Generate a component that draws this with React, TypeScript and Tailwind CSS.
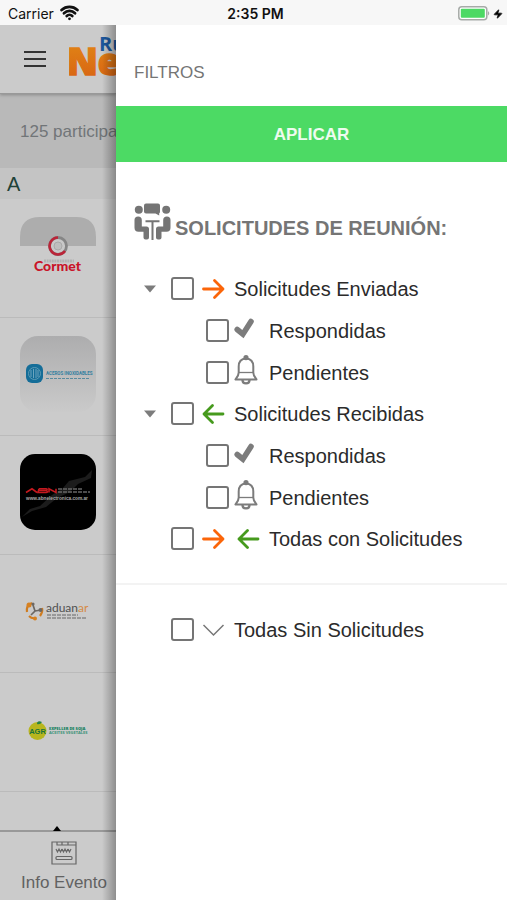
import { Wifi, Zap } from "lucide-react";
import type { ReactNode } from "react";

function Arrow({ left = false }: { left?: boolean }) {
  return (
    <svg
      viewBox="0 0 24 22"
      className={left ? "h-[22px] w-6 shrink-0 text-[#469a1d]" : "h-[22px] w-6 shrink-0 text-[#fb6509]"}
      fill="none"
      stroke="currentColor"
      strokeWidth="2.8"
      strokeLinecap="round"
      strokeLinejoin="round"
      aria-hidden="true"
    >
      {left ? <path d="M21 11H2M10.500 2.500L2 11L10.500 19.500" /> : <path d="M1.500 11H21M12.500 2.500L21 11L12.500 19.500" />}
    </svg>
  );
}

function Tick() {
  return (
    <svg viewBox="0 0 24 28" className="h-7 w-6 shrink-0" fill="none" aria-hidden="true">
      <path d="M3.200 12.500L8.900 17.200L17 4.500" stroke="#7c7c7c" strokeWidth="5.600" strokeLinecap="round" strokeLinejoin="miter" />
    </svg>
  );
}

function Bell() {
  return (
    <svg viewBox="0 0 24 30" className="h-[30px] w-6 shrink-0" fill="none" stroke="#7c7c7c" strokeWidth="2" aria-hidden="true">
      <path d="M12 3.500C7.200 3.800 4.700 7 4.700 11.500V17.500C4.700 20.500 3.300 22 1.500 24.400H22.500C20.700 22 19.300 20.500 19.300 17.500V11.500C19.300 7 16.800 3.800 12 3.500Z" strokeLinejoin="round" />
      <path d="M8.500 25C8.500 29.500 15.500 29.500 15.500 25" strokeWidth="2.300" />
      <path d="M4.500 17.500H19.500" strokeWidth="1.300" />
      <circle cx="12" cy="2.600" r="1.600" fill="#7c7c7c" />
    </svg>
  );
}

function MeetingIcon() {
  return (
    <svg viewBox="0 0 37 37" className="size-[37px] shrink-0" fill="#757575" aria-hidden="true">
      <circle cx="4.800" cy="6.800" r="4" />
      <circle cx="32.200" cy="6.800" r="4" />
      <path d="M12 0.600H24Q26 0.600 26 2.600V8.500Q26 10.300 25.200 10.300V12.500L21.500 10.500H12Q10 10.500 10 8.500V2.600Q10 .600 12 .600Z" />
      <path d="M.500 17Q.500 13.500 4.100 13.500Q7.800 13.500 7.800 17V23.500H12.500Q15 23.500 15 26V34.500Q15 36.500 13 36.500H11.500Q9.500 36.500 9.500 34.500V28.800H4.500Q.500 28.800 .500 24.800Z" />
      <path d="M36.500 17Q36.500 13.500 32.900 13.500Q29.200 13.500 29.200 17V23.500H24.500Q22 23.500 22 26V34.500Q22 36.500 24 36.500H25.500Q27.500 36.500 27.500 34.500V28.800H32.500Q36.500 28.800 36.500 24.800Z" />
      <path d="M11.500 17.200H25.500V19.200H19.500V37H17.500V19.200H11.500Z" />
    </svg>
  );
}

function Check({ id, label, icons }: { id: string; label: string; icons: ReactNode }) {
  return (
    <div className="flex h-[41px] items-center">
      <input
        id={id}
        type="checkbox"
        className="size-[23px] shrink-0 appearance-none rounded-[3px] border-2 border-[#757575] bg-white checked:bg-[#4cd964]"
      />
      <label htmlFor={id} className="flex items-center text-[20px] leading-6 whitespace-nowrap text-[#2b2b2b]">
        {icons}
        <span>{label}</span>
      </label>
    </div>
  );
}

function Group({ id, label, left }: { id: string; label: string; left: boolean }) {
  return (
    <li className="flex flex-col gap-px">
      <div className="flex items-center">
        <button aria-label={`Contraer ${label}`} className="flex h-6 w-[27px] shrink-0 items-center">
          <svg viewBox="0 0 12 8" className="h-2 w-3" aria-hidden="true">
            <path d="M0 0.500H12L6 7.500Z" fill="#7c7c7c" />
          </svg>
        </button>
        <Check id={id} label={label} icons={<span className="flex w-10 pl-2"><Arrow left={left} /></span>} />
      </div>
      <ul className="flex flex-col gap-px pl-[62px]">
        <li>
          <Check id={`${id}-respondidas`} label="Respondidas" icons={<span className="flex w-10 pl-[5px]"><Tick /></span>} />
        </li>
        <li>
          <Check id={`${id}-pendientes`} label="Pendientes" icons={<span className="flex w-10 pb-1.5 pl-[5px]"><Bell /></span>} />
        </li>
      </ul>
    </li>
  );
}

function CormetLogo() {
  return (
    <svg viewBox="0 0 76 76" className="size-[76px]" role="img" aria-label="Cormet">
      <path d="M0 29V20Q0 0 20 0H56Q76 0 76 20V29Z" fill="#adadad" />
      <circle cx="38" cy="29" r="8.500" fill="#c8c8c8" stroke="#858585" strokeWidth="2.800" />
      <path d="M38 20.500A8.500 8.500 0 1 0 45 34" fill="none" stroke="#bb2438" strokeWidth="2.600" />
      <circle cx="38" cy="29" r="4" fill="#bebebe" stroke="#a9a9a9" />
      <path d="M24 44H54" stroke="#b3b3b3" strokeWidth="3" strokeDasharray="2 .600" />
      <text x="37.500" y="54" textAnchor="middle" fontFamily="Lato, sans-serif" fontWeight="900" fontSize="14" fill="#c91429">Cormet</text>
    </svg>
  );
}

function AcerosLogo() {
  return (
    <svg viewBox="0 0 76 76" className="size-[76px]" role="img" aria-label="Aceros Inoxidables">
      <defs>
        <linearGradient id="silver" x1="0" y1="0" x2="0" y2="1">
          <stop offset="0" stopColor="#adadae" />
          <stop offset="1" stopColor="#cacaca" />
        </linearGradient>
      </defs>
      <rect width="76" height="76" rx="18" fill="url(#silver)" />
      <rect x="6" y="28" width="17" height="19" rx="6" fill="#146d98" />
      <circle cx="14.500" cy="37.500" r="6" fill="none" stroke="#5c9ab4" />
      <path d="M11 34V41M13.500 33V42M16 33V42M18 34V41" stroke="#6ca4bd" />
      <text x="26" y="39" fontFamily="Roboto, sans-serif" fontWeight="700" fontSize="4.500" fill="#33809f">ACEROS INOXIDABLES</text>
      <path d="M26 42.500H70" stroke="#578b9f" strokeDasharray="3 1" />
    </svg>
  );
}

function AbnLogo() {
  return (
    <svg viewBox="0 0 76 76" className="size-[76px]" role="img" aria-label="ABN">
      <rect width="76" height="76" rx="15" fill="#000" />
      <path d="M2 63L10 55L20 52L32 41L43 34L49 27L65 23L72 16L71 24L58 30L50 38L37 44L26 53L12 57Z" fill="#1c1c1c" />
      <path d="M6 38.500L12 34.800L17 38.500M19 34.800H26Q28 34.800 26.500 36.500Q28.500 38.500 26 38.500H18L19 34.800M19 36.500H26M29 38.500V34.800L36 38.500V34.800" fill="none" stroke="#c4191f" strokeWidth="1.600" />
      <path d="M38 35H63M38 38H70" stroke="#666" strokeWidth="1.500" strokeDasharray="4 1" />
      <text x="6" y="46" fontFamily="Liberation Sans, sans-serif" fontWeight="700" fontSize="4.700" fill="#aaa">www.abnelectronica.com.ar</text>
    </svg>
  );
}

function AduanarLogo() {
  return (
    <svg viewBox="0 0 76 76" className="size-[76px]" role="img" aria-label="Aduanar">
      <path d="M12 30Q6 32 7 39M9 43Q12 46 15 45M20 43Q23 39 22 35" fill="none" stroke="#cf7c20" strokeWidth="2.200" />
      <path d="M13 32L15 38L11 42M15 38L21 37" fill="none" stroke="#6c6864" strokeWidth="1.700" />
      <circle cx="9" cy="32" r="2.500" fill="#d68121" />
      <circle cx="13" cy="31" r="1.600" fill="#6c6864" />
      <circle cx="20.500" cy="37" r="2" fill="#6c6864" />
      <circle cx="15" cy="45.500" r="2" fill="#d68121" />
      <text x="26" y="39" fontFamily="Lato, sans-serif" fontWeight="400" fontSize="12" fill="#505050">aduan<tspan fill="#d58a46">ar</tspan></text>
      <path d="M27 42H58M27 45H67" stroke="#666" strokeDasharray="4 1" />
    </svg>
  );
}

function AgrLogo() {
  return (
    <svg viewBox="0 0 76 76" className="size-[76px]" role="img" aria-label="AGR">
      <circle cx="17.500" cy="40" r="9" fill="#b8b61e" />
      <path d="M17 33Q17 29 22 31Q20 34 17 33" fill="#268344" />
      <text x="17.500" y="43" textAnchor="middle" fontFamily="Liberation Sans, sans-serif" fontWeight="700" fontSize="7.500" fill="#17733d">AGR</text>
      <text x="29" y="39" fontFamily="Open Sans, sans-serif" fontWeight="800" fontSize="4" fill="#12805d">EXPELLER DE SOJA</text>
      <text x="29" y="43" fontFamily="Open Sans, sans-serif" fontWeight="700" fontSize="4" fill="#399177">ACEITES VEGETALES</text>
    </svg>
  );
}

const companies = [
  { name: "Cormet", logo: <CormetLogo /> },
  { name: "Aceros", logo: <AcerosLogo /> },
  { name: "ABN", logo: <AbnLogo /> },
  { name: "Aduanar", logo: <AduanarLogo /> },
  { name: "AGR", logo: <AgrLogo /> },
];

export default function App() {
  return (
    <div className="flex h-screen flex-col bg-white font-['Liberation_Sans',Arial,sans-serif]">
      <div className="grid h-[25px] shrink-0 grid-cols-3 items-center bg-[#f7f7f7] pr-1 pl-2 font-['Inter',sans-serif] text-[14px] text-[#111]">
        <div className="flex items-center gap-1.5 pt-0.5">
          <span>Carrier</span>
          <Wifi className="-mt-0.5 size-[19px]" strokeWidth={3.5} aria-hidden="true" />
        </div>
        <span className="pt-0.5 text-center font-semibold">2:35 PM</span>
        <div className="flex items-center justify-end pt-0.5">
          <svg viewBox="0 0 33 15" className="h-[15px] w-[33px]" aria-hidden="true">
            <rect x="0.800" y="0.800" width="28" height="13" rx="3" fill="#fff" stroke="#a6aaa7" strokeWidth="1.500" />
            <rect x="2.800" y="2.800" width="24" height="9" rx="1" fill="#4cd964" />
            <path d="M30 5Q32.500 7.300 30 9.600Z" fill="#a6aaa7" />
          </svg>
          <Zap className="ml-0.5 h-3 w-2.5 fill-black" aria-hidden="true" />
        </div>
      </div>

      <div className="flex min-h-0 flex-1">
        <main className="relative flex w-[116px] shrink-0 flex-col overflow-hidden bg-[#cbcbcb]">
          <header className="z-10 flex h-[69px] shrink-0 items-center border-b border-[#999] pl-6 shadow-[0_1px_3px_#888]">
            <button aria-label="Menú" className="flex w-[22px] shrink-0 flex-col gap-[5px]">
              <span className="h-0.5 bg-[#333]" />
              <span className="h-0.5 bg-[#333]" />
              <span className="h-0.5 bg-[#333]" />
            </button>
            <svg viewBox="0 0 100 48" className="ml-[23px] h-12 w-[100px] shrink-0" role="img" aria-label="Rueda de Negocios">
              <defs>
                <linearGradient id="orange" x1="0" y1="0" x2="0" y2="1">
                  <stop offset="0" stopColor="#e28a16" />
                  <stop offset="1" stopColor="#d75f13" />
                </linearGradient>
              </defs>
              <text x="30" y="16" fontFamily="Open Sans, sans-serif" fontWeight="700" fontSize="20" fill="#1c579c">Rueda</text>
              <text x="-2" y="40" fontFamily="Open Sans, sans-serif" fontWeight="800" fontSize="37" fill="url(#orange)" stroke="url(#orange)" strokeWidth="1.500">Neg</text>
            </svg>
          </header>
          <p className="flex h-[74px] shrink-0 items-center bg-[#b9b9b9] pt-0.5 pl-5 text-[17px] whitespace-nowrap text-[#717578]">125 participantes</p>
          <h2 className="flex h-[31px] shrink-0 items-center bg-[#c4c4c4] pl-[7px] text-[20px] text-[#204238]">A</h2>
          <ul className="min-h-0 flex-1 overflow-hidden">
            {companies.map((company) => (
              <li key={company.name} className="h-[118px] border-b border-[#bbb] pt-[18px] pl-5 odd:h-[119px]">
                {company.logo}
              </li>
            ))}
          </ul>
          <nav className="flex h-[70px] shrink-0 flex-col border-t-2 border-[#999]">
            <svg viewBox="0 0 8 5" className="-mt-[6px] ml-[53px] h-[5px] w-2 shrink-0" aria-hidden="true">
              <path d="M4 0L8 5H0Z" fill="#000" />
            </svg>
            <a href="#info" className="flex w-32 flex-col items-center gap-1.5 pt-2.5 text-[17px] leading-6 whitespace-nowrap text-[#626262]">
              <svg viewBox="0 0 26 24" className="h-6 w-[26px]" fill="none" stroke="#666" strokeWidth="1.200" aria-hidden="true">
                <path d="M1 1H25V23H1ZM6 1V4H25M11 1V4M17 1V4M5 8L6.500 11L8 8L9.500 11L11 8M11 8L12.500 11L14 8L15.500 11L17 8M17 8L18.500 11L20 8" />
                <rect x="5" y="15.500" width="16" height="3" rx="1" />
              </svg>
              <span>Info Evento</span>
            </a>
          </nav>
          <div className="pointer-events-none absolute inset-y-0 right-0 z-20 w-3.5 bg-gradient-to-r from-transparent to-black/30" />
        </main>

        <aside className="min-w-0 flex-1 overflow-hidden bg-white" aria-label="Filtros">
          <h1 className="flex h-[81px] items-center pt-3.5 pl-[18px] text-[17px] text-[#757575]">FILTROS</h1>
          <button className="h-14 w-full bg-[#4cda64] pt-0.5 text-[17px] font-bold text-[#eefbef]">APLICAR</button>
          <h2 className="flex h-[106px] items-center pt-3 pl-[18px] text-[20px] font-bold whitespace-nowrap text-[#757575]">
            <MeetingIcon />
            <span className="pt-3.5 pl-1">SOLICITUDES DE REUNIÓN:</span>
          </h2>
          <ul className="pl-7">
            <Group id="enviadas" label="Solicitudes Enviadas" left={false} />
            <Group id="recibidas" label="Solicitudes Recibidas" left />
            <li className="pl-[27px]">
              <Check
                id="todas-con"
                label="Todas con Solicitudes"
                icons={<span className="flex w-[75px] gap-[11px] pl-2"><Arrow /><Arrow left /></span>}
              />
            </li>
          </ul>
          <div className="mt-6 border-t-2 border-[#f3f3f3] pt-6 pl-[55px]">
            <Check
              id="todas-sin"
              label="Todas Sin Solicitudes"
              icons={
                <span className="flex w-10 pl-2">
                  <svg viewBox="0 0 24 14" className="h-3.5 w-6" fill="none" stroke="#777" strokeWidth="1.500" aria-hidden="true">
                    <path d="M1.500 2L11.500 12L21.500 2" />
                  </svg>
                </span>
              }
            />
          </div>
        </aside>
      </div>
    </div>
  );
}
